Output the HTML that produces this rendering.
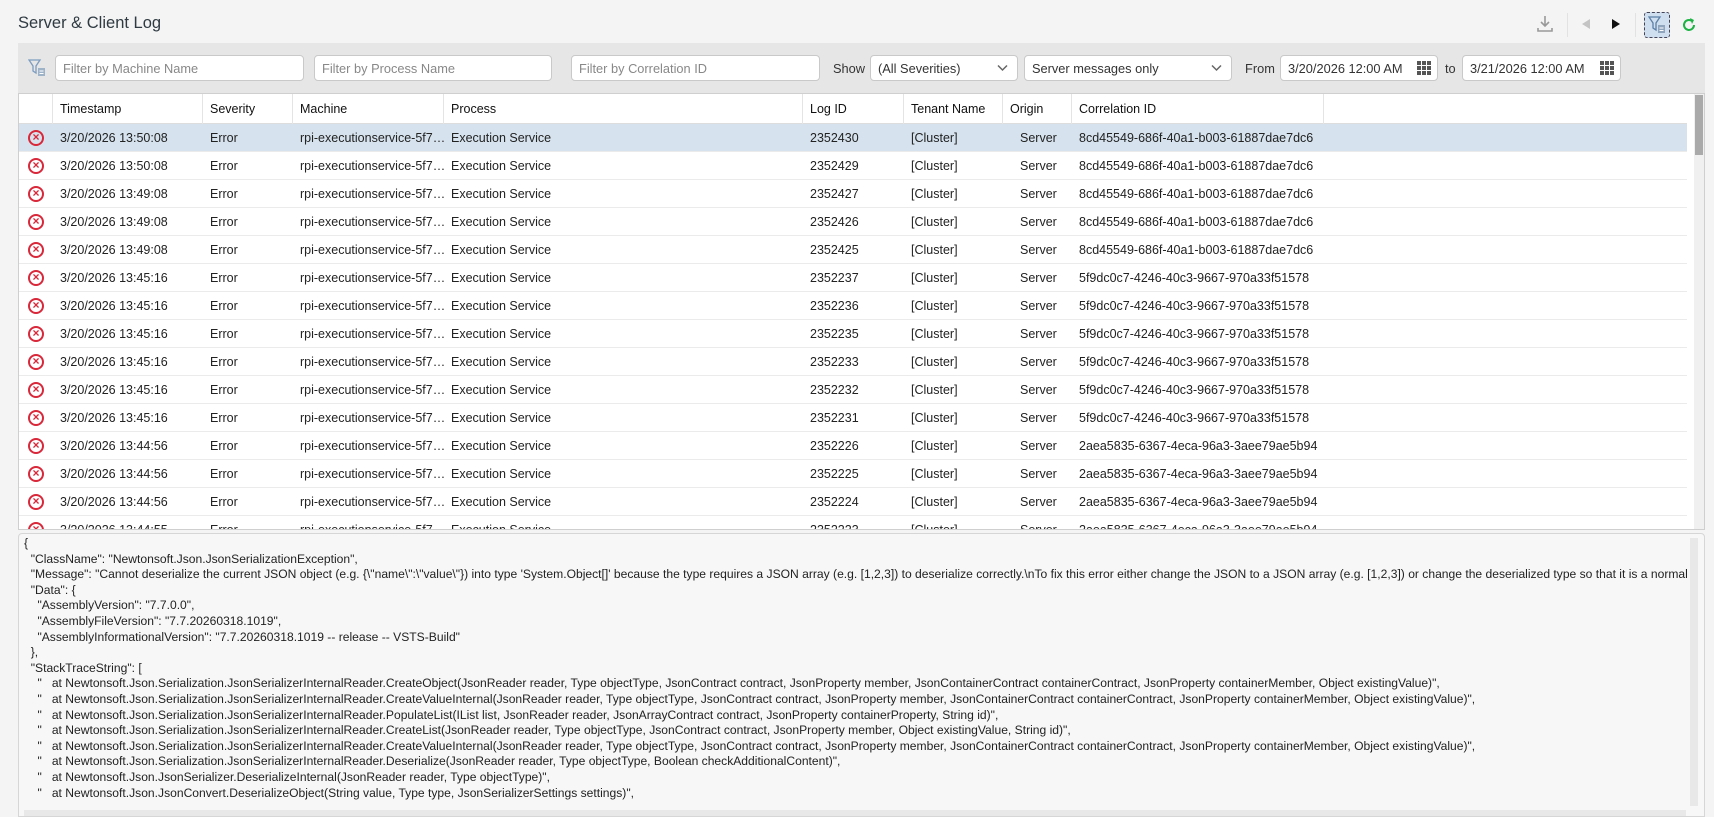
<!DOCTYPE html>
<html><head><meta charset="utf-8"><style>
*{box-sizing:border-box;margin:0;padding:0}
body{width:1714px;height:817px;overflow:hidden;background:#f4f4f4;font-family:"Liberation Sans",sans-serif;color:#222;position:relative}
.title{position:absolute;left:18px;top:14px;font-size:16.5px;color:#2f3a42}
.bar{position:absolute;left:18px;top:43px;width:1687px;height:50px;background:#e6e6e6}
.inp{position:absolute;top:12px;height:26px;background:#fff;border:1px solid #c9c9c9;border-radius:4px;font-size:12.8px;color:#333;padding:5px 7px;white-space:nowrap;overflow:hidden}
.ph{color:#888}
.lbl{position:absolute;top:18px;font-size:12.8px;color:#333}
.chev{position:absolute;right:9px;top:8px}
.grid{position:absolute;left:18px;top:93px;width:1687px;height:437px;background:#fff;border:1px solid #cfcfcf;overflow:hidden}
.row{position:absolute;left:0;width:1668px;height:28px;border-bottom:1px solid #ebebeb;font-size:12.5px}
.row div{position:absolute;top:7px;white-space:nowrap}
.hdr{top:0;height:30px;border-bottom:1px solid #ddd}
.hdr div{top:8px;color:#111}
.hdr span{position:absolute;top:0;height:30px;border-left:1px solid #e4e4e4}
.sel{background:#d6e3ee}
.err{width:16px;height:16px;border:2px solid #d9283a;border-radius:50%;left:9px;top:6px!important;color:#d9283a;font-size:12px;line-height:11px;text-align:center;font-weight:bold}
.vs{position:absolute;right:0;top:0;width:10px;height:100%;background:#f0f0f0}
.vs i{position:absolute;left:1px;top:1px;width:8px;height:60px;background:#aaa}
.det{position:absolute;left:18px;top:533px;width:1687px;height:284px;background:#f7f7f7;border:1px solid #d6d6d6;border-radius:4px 4px 0 0;overflow:hidden}
.det pre{font-family:"Liberation Sans",sans-serif;font-size:12.1px;line-height:15.6px;color:#222;padding:2px 0 0 5px;white-space:pre}
</style></head><body>
<div class="title">Server &amp; Client Log</div>
<svg style="position:absolute;left:1536px;top:14px" width="18" height="20" viewBox="0 0 18 20"><path d="M9 2v10M5 8l4 4 4-4M2 14v3h14v-3" fill="none" stroke="#999" stroke-width="1.6"/></svg>
<div style="position:absolute;left:1567px;top:13px;width:1px;height:24px;background:#e2e2e2"></div>
<svg style="position:absolute;left:1580px;top:18px" width="12" height="12"><path d="M10 1L2 6l8 5z" fill="#c4c4c4"/></svg>
<svg style="position:absolute;left:1610px;top:18px" width="12" height="12"><path d="M2 1l8 5-8 5z" fill="#111"/></svg>
<div style="position:absolute;left:1635px;top:13px;width:1px;height:24px;background:#e2e2e2"></div>
<div style="position:absolute;left:1644px;top:12px;width:26px;height:26px;background:#cfdff0;border:1px dashed #445;border-radius:3px"></div>
<svg style="position:absolute;left:1648px;top:15px" width="20" height="20"><path d="M1 2h11l-4 6v7l-3-2V8z" fill="none" stroke="#5b7fa6" stroke-width="1.3"/><rect x="10" y="10" width="7" height="8" fill="#8fa5bd"/><path d="M11.5 13h4M11.5 15.5h4" stroke="#fff"/></svg>
<svg style="position:absolute;left:1680px;top:16px" width="18" height="18"><path d="M14 9a5 5 0 1 1-2-4" fill="none" stroke="#1db344" stroke-width="2"/><path d="M10 2l4 2-2 4" fill="#1db344"/></svg>

<div class="bar">
<svg style="position:absolute;left:10px;top:15px" width="20" height="20"><path d="M1 2h11l-4 6v7l-3-2V8z" fill="none" stroke="#7c9cc0" stroke-width="1.3"/><rect x="10" y="10" width="7" height="8" fill="#9fb3c8"/><path d="M11.5 13h4M11.5 15.5h4" stroke="#fff"/></svg>
<div class="inp" style="left:37px;width:249px"><span class="ph">Filter by Machine Name</span></div>
<div class="inp" style="left:296px;width:238px"><span class="ph">Filter by Process Name</span></div>
<div class="inp" style="left:553px;width:249px"><span class="ph">Filter by Correlation ID</span></div>
<div class="lbl" style="left:815px">Show</div>
<div class="inp" style="left:852px;width:148px">(All Severities)<svg class="chev" width="11" height="8"><path d="M1 1.5l4.5 4.5 4.5-4.5" fill="none" stroke="#666" stroke-width="1.5"/></svg></div>
<div class="inp" style="left:1006px;width:208px">Server messages only<svg class="chev" width="11" height="8"><path d="M1 1.5l4.5 4.5 4.5-4.5" fill="none" stroke="#666" stroke-width="1.5"/></svg></div>
<div class="lbl" style="left:1227px">From</div>
<div class="inp" style="left:1262px;width:158px">3/20/2026 12:00 AM<svg style="position:absolute;right:6px;top:5px" width="14" height="14"><g fill="#555"><rect x="0" y="0" width="4" height="4"/><rect x="5" y="0" width="4" height="4"/><rect x="10" y="0" width="4" height="4"/><rect x="0" y="5" width="4" height="4"/><rect x="5" y="5" width="4" height="4"/><rect x="10" y="5" width="4" height="4"/><rect x="0" y="10" width="4" height="4"/><rect x="5" y="10" width="4" height="4"/><rect x="10" y="10" width="4" height="4"/></g></svg></div>
<div class="lbl" style="left:1427px">to</div>
<div class="inp" style="left:1444px;width:159px">3/21/2026 12:00 AM<svg style="position:absolute;right:6px;top:5px" width="14" height="14"><g fill="#555"><rect x="0" y="0" width="4" height="4"/><rect x="5" y="0" width="4" height="4"/><rect x="10" y="0" width="4" height="4"/><rect x="0" y="5" width="4" height="4"/><rect x="5" y="5" width="4" height="4"/><rect x="10" y="5" width="4" height="4"/><rect x="0" y="10" width="4" height="4"/><rect x="5" y="10" width="4" height="4"/><rect x="10" y="10" width="4" height="4"/></g></svg></div>
</div>

<div class="grid">
<div class="row hdr"><span style="left:33px"></span><span style="left:183px"></span><span style="left:273px"></span><span style="left:424px"></span><span style="left:783px"></span><span style="left:884px"></span><span style="left:983px"></span><span style="left:1052px"></span><span style="left:1304px"></span>
<div style="left:41px">Timestamp</div><div style="left:191px">Severity</div><div style="left:281px">Machine</div><div style="left:432px">Process</div><div style="left:791px">Log ID</div><div style="left:892px">Tenant Name</div><div style="left:991px">Origin</div><div style="left:1060px">Correlation ID</div></div>
<div id="rows"></div>
<div class="vs"><i></i></div>
</div>

<div class="det"><pre>{
  "ClassName": "Newtonsoft.Json.JsonSerializationException",
  "Message": "Cannot deserialize the current JSON object (e.g. {\"name\":\"value\"}) into type 'System.Object[]' because the type requires a JSON array (e.g. [1,2,3]) to deserialize correctly.\nTo fix this error either change the JSON to a JSON array (e.g. [1,2,3]) or change the deserialized type so that it is a normal
  "Data": {
    "AssemblyVersion": "7.7.0.0",
    "AssemblyFileVersion": "7.7.20260318.1019",
    "AssemblyInformationalVersion": "7.7.20260318.1019 -- release -- VSTS-Build"
  },
  "StackTraceString": [
    "   at Newtonsoft.Json.Serialization.JsonSerializerInternalReader.CreateObject(JsonReader reader, Type objectType, JsonContract contract, JsonProperty member, JsonContainerContract containerContract, JsonProperty containerMember, Object existingValue)",
    "   at Newtonsoft.Json.Serialization.JsonSerializerInternalReader.CreateValueInternal(JsonReader reader, Type objectType, JsonContract contract, JsonProperty member, JsonContainerContract containerContract, JsonProperty containerMember, Object existingValue)",
    "   at Newtonsoft.Json.Serialization.JsonSerializerInternalReader.PopulateList(IList list, JsonReader reader, JsonArrayContract contract, JsonProperty containerProperty, String id)",
    "   at Newtonsoft.Json.Serialization.JsonSerializerInternalReader.CreateList(JsonReader reader, Type objectType, JsonContract contract, JsonProperty member, Object existingValue, String id)",
    "   at Newtonsoft.Json.Serialization.JsonSerializerInternalReader.CreateValueInternal(JsonReader reader, Type objectType, JsonContract contract, JsonProperty member, JsonContainerContract containerContract, JsonProperty containerMember, Object existingValue)",
    "   at Newtonsoft.Json.Serialization.JsonSerializerInternalReader.Deserialize(JsonReader reader, Type objectType, Boolean checkAdditionalContent)",
    "   at Newtonsoft.Json.JsonSerializer.DeserializeInternal(JsonReader reader, Type objectType)",
    "   at Newtonsoft.Json.JsonConvert.DeserializeObject(String value, Type type, JsonSerializerSettings settings)",</pre>
<div style="position:absolute;right:6px;top:4px;width:8px;height:268px;background:#e8e8e8"></div>
<div style="position:absolute;left:5px;bottom:0;width:1662px;height:6px;background:#e8e8e8"></div>
</div>
<script>
var d=[["3/20/2026 13:50:08","2352430","8cd45549-686f-40a1-b003-61887dae7dc6"],["3/20/2026 13:50:08","2352429","8cd45549-686f-40a1-b003-61887dae7dc6"],["3/20/2026 13:49:08","2352427","8cd45549-686f-40a1-b003-61887dae7dc6"],["3/20/2026 13:49:08","2352426","8cd45549-686f-40a1-b003-61887dae7dc6"],["3/20/2026 13:49:08","2352425","8cd45549-686f-40a1-b003-61887dae7dc6"],["3/20/2026 13:45:16","2352237","5f9dc0c7-4246-40c3-9667-970a33f51578"],["3/20/2026 13:45:16","2352236","5f9dc0c7-4246-40c3-9667-970a33f51578"],["3/20/2026 13:45:16","2352235","5f9dc0c7-4246-40c3-9667-970a33f51578"],["3/20/2026 13:45:16","2352233","5f9dc0c7-4246-40c3-9667-970a33f51578"],["3/20/2026 13:45:16","2352232","5f9dc0c7-4246-40c3-9667-970a33f51578"],["3/20/2026 13:45:16","2352231","5f9dc0c7-4246-40c3-9667-970a33f51578"],["3/20/2026 13:44:56","2352226","2aea5835-6367-4eca-96a3-3aee79ae5b94"],["3/20/2026 13:44:56","2352225","2aea5835-6367-4eca-96a3-3aee79ae5b94"],["3/20/2026 13:44:56","2352224","2aea5835-6367-4eca-96a3-3aee79ae5b94"],["3/20/2026 13:44:55","2352223","2aea5835-6367-4eca-96a3-3aee79ae5b94"]];
var h="";d.forEach(function(r,i){h+='<div class="row'+(i==0?' sel':'')+'" style="top:'+(30+i*28)+'px"><div class="err">×</div><div style="left:41px">'+r[0]+'</div><div style="left:191px">Error</div><div style="left:281px">rpi-executionservice-5f7…</div><div style="left:432px">Execution Service</div><div style="left:791px">'+r[1]+'</div><div style="left:892px">[Cluster]</div><div style="left:1001px">Server</div><div style="left:1060px">'+r[2]+'</div></div>';});
document.getElementById("rows").innerHTML=h;
</script>
</body></html>
